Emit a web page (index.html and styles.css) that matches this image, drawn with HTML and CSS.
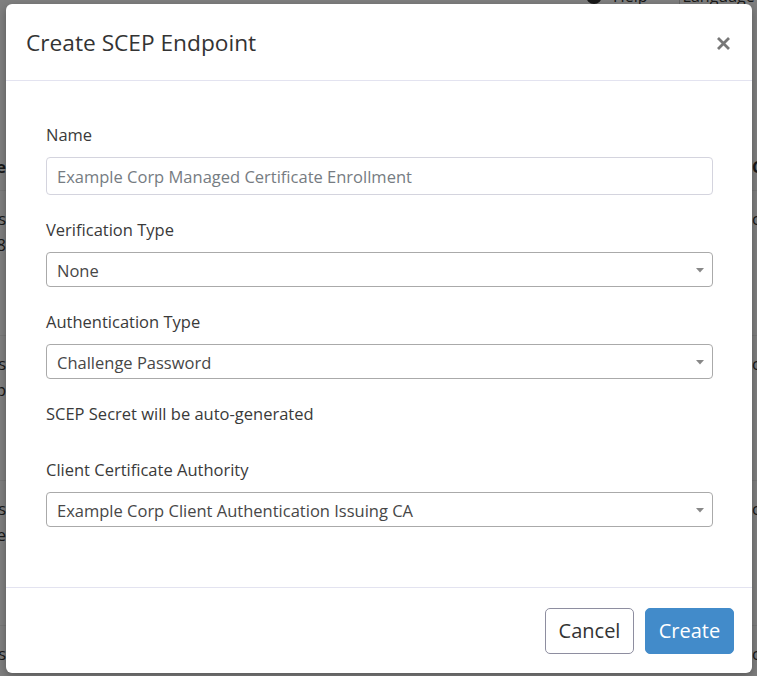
FILE: index.html
```html
<!DOCTYPE html>
<html lang="en">
<head>
<meta charset="utf-8">
<title>Create SCEP Endpoint</title>
<link rel="stylesheet" href="styles.css">
</head>
<body>
<div class="page">
  <div class="topnav">
    <span class="nav-item"><svg class="help-icon" width="16" height="16" viewBox="0 0 16 16"><circle cx="8" cy="8" r="8" fill="#333"/></svg>Help</span>
    <span class="nav-sep"></span>
    <span class="nav-item">Language</span>
  </div>
  <div class="table">
    <div class="trow thead">
      <div class="cell-l"><span>Name</span></div>
      <div class="cell-r"><span>Cr</span></div>
    </div>
    <div class="trow">
      <div class="cell-l"><span>Devices</span><span>2028</span></div>
      <div class="cell-r"><span>co</span></div>
    </div>
    <div class="trow">
      <div class="cell-l"><span>Servers</span><span>Web</span></div>
      <div class="cell-r"><span>co</span></div>
    </div>
    <div class="trow">
      <div class="cell-l"><span>Clients</span><span>Issue</span></div>
      <div class="cell-r"><span>co</span></div>
    </div>
    <div class="trow short">
      <div class="cell-l"><span>Users</span></div>
      <div class="cell-r"><span>co</span></div>
    </div>
  </div>
</div>
<div class="backdrop"></div>
<div class="modal">
  <div class="modal-header">
    <h4 class="modal-title">Create SCEP Endpoint</h4>
    <button class="close" type="button" aria-label="Close">
      <svg width="15" height="15" viewBox="0 0 15 15"><path d="M2 2 L13 13 M13 2 L2 13" stroke="#777" stroke-width="2.8"/></svg>
    </button>
  </div>
  <div class="modal-body">
    <div class="group">
      <label class="label">Name</label>
      <input class="input" type="text" placeholder="Example Corp Managed Certificate Enrollment">
    </div>
    <div class="group">
      <label class="label">Verification Type</label>
      <div class="select"><span>None</span><svg width="8" height="5" viewBox="0 0 8 5"><polygon points="0,0 8,0 4,4.6" fill="#888"/></svg></div>
    </div>
    <div class="group">
      <label class="label">Authentication Type</label>
      <div class="select"><span>Challenge Password</span><svg width="8" height="5" viewBox="0 0 8 5"><polygon points="0,0 8,0 4,4.6" fill="#888"/></svg></div>
    </div>
    <p class="note">SCEP Secret will be auto-generated</p>
    <div class="group last">
      <label class="label">Client Certificate Authority</label>
      <div class="select"><span>Example Corp Client Authentication Issuing CA</span><svg width="8" height="5" viewBox="0 0 8 5"><polygon points="0,0 8,0 4,4.6" fill="#888"/></svg></div>
    </div>
  </div>
  <div class="modal-footer">
    <button class="btn btn-cancel" type="button">Cancel</button>
    <button class="btn btn-create" type="button">Create</button>
  </div>
</div>
</body>
</html>
```
FILE: styles.css
```css
* { box-sizing: border-box; }
html, body { margin: 0; padding: 0; }
body {
  width: 757px;
  height: 676px;
  overflow: hidden;
  position: relative;
  background: #fff;
  color: #333;
  font-family: "Open Sans", "Noto Sans", sans-serif;
  font-size: 16.5px;
}

/* underlying page */
.page { width: 757px; height: 676px; overflow: hidden; }
.topnav {
  display: flex;
  align-items: center;
  height: 20px;
  margin-top: -14px;
  padding-left: 586px;
  font-size: 16px;
  line-height: 20px;
  color: #333;
}
.nav-item { display: flex; align-items: center; white-space: nowrap; }
.help-icon { margin-right: 11px; }
.nav-sep { width: 1px; height: 20px; background: #ccc; margin: 0 3px 0 31px; }
.table { margin-top: 132px; }
.trow {
  display: flex;
  justify-content: space-between;
  height: 145px;
  border-top: 1px solid #eee;
  padding-top: 15px;
}
.trow.short { height: 51px; }
.thead { height: 52px; border-top: none; padding-top: 16px; font-weight: 700; }
.cell-l {
  width: 6px;
  overflow: hidden;
  display: flex;
  flex-direction: column;
  align-items: flex-end;
  line-height: 26px;
  white-space: nowrap;
}
.cell-r { width: 5px; overflow: hidden; line-height: 26px; white-space: nowrap; }

.backdrop {
  position: absolute;
  inset: 0;
  background: rgba(0, 0, 0, 0.5);
}

/* modal */
.modal {
  position: absolute;
  left: 6px;
  top: 4px;
  width: 746px;
  background: #fff;
  border-radius: 6px;
  box-shadow: 0 3px 9px rgba(0, 0, 0, 0.3);
}
.modal-header {
  display: flex;
  align-items: center;
  justify-content: space-between;
  padding: 21px 21px 19px 20px;
  border-bottom: 1px solid #e3e3f0;
}
.modal-title {
  margin: 0;
  font-size: 22.7px;
  line-height: 36px;
  font-weight: 400;
  color: #333;
}
.close {
  border: none;
  background: none;
  padding: 0;
  width: 15px;
  height: 15px;
  display: flex;
}
.modal-body { padding: 42px 39px 60px 40px; }
.group { margin-bottom: 23px; }
.group.last { margin-bottom: 0; }
.label {
  display: block;
  font-size: 16.5px;
  line-height: 24px;
  margin-bottom: 10px;
  color: #3a3a3a;
}
.input {
  display: block;
  width: 100%;
  height: 38px;
  border: 1px solid #d4d4de;
  border-radius: 4px;
  padding: 1px 10px 0;
  font-family: inherit;
  font-size: 16.5px;
  color: #444;
  background: #fff;
}
.input::placeholder { color: #767c82; opacity: 1; }
.select {
  display: flex;
  align-items: center;
  justify-content: space-between;
  height: 35px;
  border: 1px solid #aaa;
  border-radius: 4px;
  padding: 1px 8px 0 10px;
  color: #474747;
  font-size: 16.5px;
}
.note { margin: 0 0 32px; line-height: 24px; color: #3a3a3a; }
.modal-footer {
  display: flex;
  justify-content: flex-end;
  gap: 11px;
  padding: 20px 18px 19px;
  border-top: 1px solid #e3e3f0;
}
.btn {
  width: 89px;
  height: 46px;
  border-radius: 5px;
  font-family: inherit;
  font-size: 20px;
  line-height: 30px;
  padding: 0;
  border: 1px solid;
}
.btn-cancel { background: #fff; border-color: #8e8ea0; color: #333; }
.btn-create { background: #428bca; border-color: #428bca; color: #fff; }
```
